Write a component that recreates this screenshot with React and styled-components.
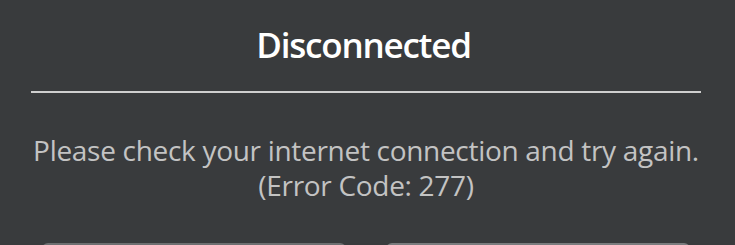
import styled, { createGlobalStyle } from "styled-components";

const GlobalStyle = createGlobalStyle`
  html, body {
    margin: 0;
    padding: 0;
    background-color: #393b3d;
  }
  body {
    font-family: "Open Sans", "Noto Sans", sans-serif;
  }
`;

/** style components */
const Dialog = styled.div`
  width: 735px;
  height: 245px;
  background-color: #393b3d;
  display: flex;
  flex-direction: column;
  overflow: hidden;
`;

const Title = styled.h1`
  margin: 0;
  padding: 23px 8px 0 0;
  height: 43px;
  text-align: center;
  color: #ffffff;
  font-size: 35px;
  font-weight: 600;
  line-height: 43px;
  letter-spacing: -1.2px;
`;

const Divider = styled.hr`
  margin: 25px 34px 0 31px;
  border: 0;
  height: 2px;
  background-color: #cfcfcf;
`;

const Message = styled.p`
  margin: 40px 0 0;
  padding-right: 3px;
  text-align: center;
  color: #c3c3c3;
  font-size: 28px;
  line-height: 35px;
  letter-spacing: -0.3px;
`;

const Buttons = styled.div`
  display: flex;
  gap: 40px;
  padding: 0 45px 0 42px;
  margin-top: auto;
  height: 2px;
`;

const Button = styled.button`
  flex: 1;
  height: 40px;
  border: 0;
  border-radius: 6px 6px 0 0;
  background-color: ${(props) => (props.primary ? "#7a7c7e" : "#6d6f71")};
`;

export default function App() {
  return (
    <>
      <GlobalStyle />
      <Dialog>
        <Title>Disconnected</Title>
        <Divider />
        <Message>
          Please check your internet connection and try again.
          <br />
          (Error Code: 277)
        </Message>
        <Buttons>
          <Button aria-label="Leave" />
          <Button primary aria-label="Reconnect" />
        </Buttons>
      </Dialog>
    </>
  );
}
